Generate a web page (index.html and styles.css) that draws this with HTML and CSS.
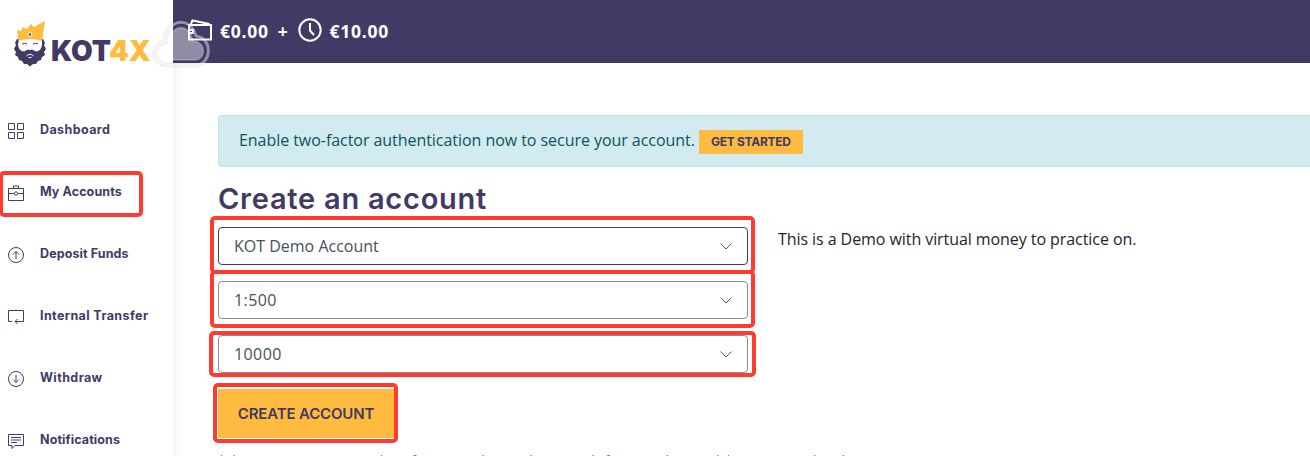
FILE: index.html
```html
<!DOCTYPE html>
<html lang="en">
<head>
  <meta charset="UTF-8">
  <meta name="viewport" content="width=device-width, initial-scale=1.0">
  <title>KOT4X - Create an account</title>
  <link rel="stylesheet" href="styles.css">
</head>
<body>
<div class="layout">
  <!-- Sidebar -->
  <aside class="sidebar">
    <a class="logo" href="#">
      <svg class="logo-king" width="32" height="46" viewBox="0 0 32 46">
        <path class="beard" d="M3 18 L1 22 L2 24 L0 28 L2 31 L1 34 L4 36 L5 39 L8 40 L10 43 L13 43 L16 45.500 L19 43 L22 43 L24 40 L27 39 L28 36 L31 34 L30 31 L32 28 L30 24 L31 22 L29 18 Z"/>
        <path class="face" d="M5 18 H28 V24 Q27 30 22 30.500 L18 28.500 L16 29 L14 28.500 L10 30.500 Q5 30 4 24 Z"/>
        <path class="crown" d="M4.500 20 L3 9 L7 10 L9 6 L13 8 L17 3 L20 6 L31 0 L28 20 Q16 16 4.500 20 Z"/>
        <ellipse class="jewel" cx="16" cy="13.500" rx="1.300" ry="2.500"/>
        <path class="brow" d="M8 23 q2.500 -1.500 5 0 M19 23 q2.500 -1.500 5 0"/>
        <path class="mouth" d="M12.500 35 q3.500 -3.500 7 0 M14.500 36.500h3"/>
      </svg>
      <span class="logo-text">KOT<em>4X</em></span>
    </a>
    <nav class="menu">
      <a class="menu-item" href="#">
        <svg width="16" height="16" viewBox="0 0 16 16"><path d="M.5 .5h6v6h-6z M9.500 .5h6v6h-6z M.5 9.500h6v6h-6z M9.500 9.500h6v6h-6z"/></svg>
        <span class="wide">Dashboard</span>
      </a>
      <a class="menu-item" href="#">
        <svg width="16" height="16" viewBox="0 0 16 16"><path d="M.5 3.500h15v12h-15z M5.500 3.500v-2.500h5v2.500 M.5 8.500h5.500 M10 8.500h5.500"/><circle cx="8" cy="8.500" r="1.700"/></svg>
        <span>My Accounts</span>
        <i class="mark mark-menu"></i>
      </a>
      <a class="menu-item" href="#">
        <svg width="16" height="16" viewBox="0 0 16 16"><circle cx="8" cy="8" r="7.500"/><path d="M8 12V4.500 M5 7.500l3-3 3 3"/></svg>
        <span>Deposit Funds</span>
      </a>
      <a class="menu-item" href="#">
        <svg width="16" height="16" viewBox="0 0 16 16"><path d="M4 12.500H.5v-11h15v11H7.500 M9.500 10l-2.500 2.500L9.500 15"/></svg>
        <span class="wide">Internal Transfer</span>
      </a>
      <a class="menu-item" href="#">
        <svg width="16" height="16" viewBox="0 0 16 16"><circle cx="8" cy="8" r="7.500"/><path d="M8 4v7.500 M5 8.500l3 3 3-3"/></svg>
        <span class="wide">Withdraw</span>
      </a>
      <a class="menu-item" href="#">
        <svg width="16" height="16" viewBox="0 0 16 16"><path d="M.5 1.500h15v11H7l-3 3v-3H.5z M3 4.500h10 M3 7h10 M3 9.500h6"/></svg>
        <span>Notifications</span>
      </a>
    </nav>
  </aside>

  <!-- Main column -->
  <div class="main">
    <header class="topbar">
      <svg class="wallet" width="24" height="22" viewBox="0 0 24 22"><path d="M1 6h22v14.500H1z M2.500 6L4.500 1.500l17 3.500 M1 11h4v3H1"/></svg>
      <span class="balance">€0.00</span>
      <span class="plus">+</span>
      <svg class="clock" width="24" height="24" viewBox="0 0 24 24"><circle cx="12" cy="12" r="10.700"/><path d="M12 5v7.500l4 4.500"/></svg>
      <span class="bonus">€10.00</span>
    </header>

    <main class="content">
      <div class="alert">
        <span class="alert-text">Enable two-factor authentication now to secure your account.</span>
        <a class="btn-small" href="#">GET STARTED</a>
      </div>

      <h1>Create an account</h1>

      <div class="row">
        <form class="fields">
          <div class="select active">
            <span>KOT Demo Account</span>
            <svg width="12" height="7" viewBox="0 0 12 7"><path d="M.5 .5L6 6 11.500 .5"/></svg>
            <i class="mark mark-type"></i>
          </div>
          <div class="select">
            <span class="number">1:500</span>
            <svg width="12" height="7" viewBox="0 0 12 7"><path d="M.5 .5L6 6 11.500 .5"/></svg>
            <i class="mark mark-leverage"></i>
          </div>
          <div class="select">
            <span class="number">10000</span>
            <svg width="12" height="7" viewBox="0 0 12 7"><path d="M.5 .5L6 6 11.500 .5"/></svg>
            <i class="mark mark-balance"></i>
          </div>
          <div class="btn-create"><span>CREATE ACCOUNT</span><i class="mark mark-create"></i></div>
        </form>
        <p class="info">This is a Demo with virtual money to practice on.</p>
      </div>
      <p class="note">*There is a maximum number of accounts that can be opened. If you need more, delete an unused trading account.</p>
    </main>
  </div>
</div>

<!-- Floating cloud badge -->
<svg class="cloud" width="62" height="54" viewBox="0 0 62 54">
  <path class="cloud-shadow" d="M17 47C0 46 0 27 14 24C15 0 40 -2 45 18C62 20 61 46 45 47Z"/>
  <path class="cloud-ring" d="M17 47C0 46 0 27 14 24C15 0 40 -2 45 18C62 20 61 46 45 47Z"/>
  <path class="cloud-fill" d="M20 42C9 41 9 29 18 27C18 5 39 4 42 23C56 24 55 41 45 42Z"/>
</svg>
</body>
</html>
```
FILE: styles.css
```css
* {
  box-sizing: border-box;
}

body {
  margin: 0;
  height: 456px;
  overflow: hidden;
  background: #fff;
  color: #212529;
  font-family: "Open Sans", "Noto Sans", sans-serif;
  font-size: 16px;
}

a {
  color: inherit;
  text-decoration: none;
}

svg {
  fill: none;
  flex-shrink: 0;
}

.layout {
  display: flex;
  height: 456px;
}

/* Sidebar */
.sidebar {
  width: 173px;
  flex-shrink: 0;
  box-shadow: 0 0 14px rgba(0, 0, 0, 0.09);
  color: #403a65;
}

.logo {
  display: flex;
  height: 99px;
  padding: 21px 0 0 14px;
}

.beard,
.jewel {
  fill: #403a65;
}

.jewel {
  stroke: #fff;
}

.face {
  fill: #fff;
}

.crown {
  fill: #ffbb40;
}

.brow {
  stroke: #403a65;
}

.mouth {
  stroke: #fff;
}

.logo-text {
  margin: 13px 0 0 5px;
  font-family: Inter, sans-serif;
  font-weight: 900;
  font-size: 28px;
  line-height: 34px;
}

.logo-text em {
  color: #ffbb40;
  font-style: normal;
}

.menu-item {
  position: relative;
  display: flex;
  align-items: center;
  height: 62px;
  padding-left: 8px;
  font-family: Inter, sans-serif;
  font-size: 12.5px;
  font-weight: 700;
  letter-spacing: 0.1px;
}

.menu-item svg {
  margin: 2px 16px 0 0;
  stroke: #403a65;
}

.menu-item span {
  margin-bottom: 2px;
  white-space: nowrap;
}

.menu-item .wide {
  letter-spacing: 0.4px;
}

/* Red highlight frames */
.mark {
  position: absolute;
  border: 4px solid #ff3b30;
  border-radius: 5px;
}

.mark-menu { left: -1px; top: 10px; width: 144px; height: 46px; }
.mark-type { left: -9px; top: -12px; width: 545px; height: 58px; }
.mark-leverage { left: -9px; top: -12px; width: 545px; height: 58px; }
.mark-balance { left: -10px; top: -5px; width: 547px; height: 46px; }
.mark-create { left: -5px; top: -6px; width: 185px; height: 60px; }

/* Main column */
.main {
  flex: 1;
  min-width: 0;
}

.topbar {
  display: flex;
  align-items: center;
  height: 63px;
  padding: 0 0 2px 15px;
  background: #403a65;
  color: #fff;
  font-size: 17.5px;
  font-weight: 700;
  letter-spacing: 0.75px;
}

.topbar svg {
  stroke: #fff;
  stroke-width: 2;
}

.topbar .wallet {
  margin: 0 8px 2px 0;
}

.plus {
  margin: 0 9px;
}

.topbar .clock {
  margin: 0 8px 2px 0;
}

.content {
  padding: 52px 0 0 45px;
}

.alert {
  display: flex;
  align-items: center;
  height: 52px;
  padding-left: 20px;
  border: 1px solid #bee5eb;
  border-right: 0;
  border-radius: 4px 0 0 4px;
  background: #d1ebf0;
  color: #0c5460;
}

.alert-text {
  margin-bottom: 2px;
  letter-spacing: -0.05px;
}

.btn-small {
  width: 104px;
  height: 24px;
  margin: 2px 0 0 4px;
  background: #ffbb40;
  color: #403a65;
  font: 700 12px/24px Inter, sans-serif;
  letter-spacing: -0.3px;
  text-align: center;
}

h1 {
  height: 60px;
  margin: 0;
  padding-top: 15px;
  color: #403a65;
  font: 600 29px/34px Inter, sans-serif;
  letter-spacing: 0.75px;
}

.row {
  display: flex;
  gap: 30px;
}

.fields {
  display: flex;
  flex-direction: column;
  gap: 16px;
  width: 530px;
}

.select {
  position: relative;
  display: flex;
  align-items: center;
  justify-content: space-between;
  height: 38px;
  padding: 0 15px;
  border: 1px solid #8c89a3;
  border-radius: 4px;
  color: #495057;
}

.select.active {
  border-color: #403a65;
}

.select .number {
  letter-spacing: 0.4px;
}

.select svg {
  stroke: #555;
}

.btn-create {
  position: relative;
  width: 176px;
  height: 49px;
  background: #ffbb40;
  color: #403a65;
  font: 600 15px/49px Inter, sans-serif;
  letter-spacing: -0.15px;
  text-align: center;
}

.info {
  margin: 0;
  line-height: 24px;
  letter-spacing: -0.07px;
}

.note {
  margin: 12px 0 0;
  color: #6c757d;
  font-size: 13px;
  line-height: 20px;
}

/* Cloud badge */
.cloud {
  position: absolute;
  left: 151px;
  top: 18px;
}

.cloud-shadow {
  stroke: rgba(0, 0, 0, 0.07);
  stroke-width: 5;
}

.cloud-ring {
  stroke: rgba(255, 255, 255, 0.45);
  stroke-width: 3;
}

.cloud-fill {
  fill: rgba(255, 255, 255, 0.42);
  stroke: rgba(255, 255, 255, 0.2);
  stroke-width: 2;
}
```
